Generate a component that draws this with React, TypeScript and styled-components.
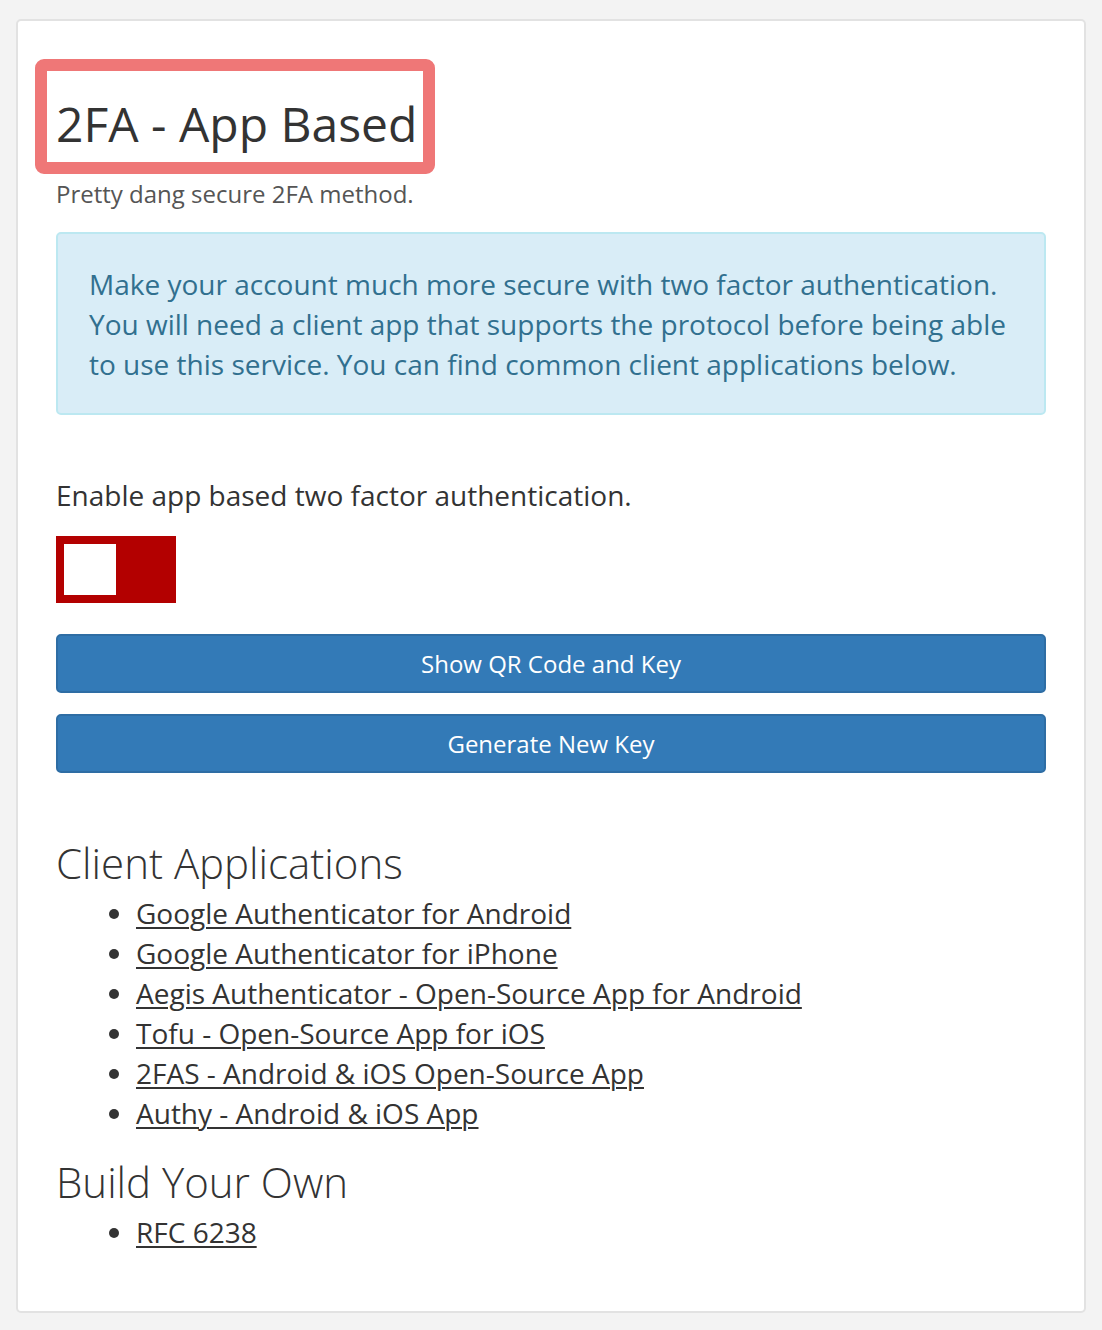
import React, { FC, useState } from 'react';
import styled, { createGlobalStyle } from 'styled-components';

type LinkItem = { id: number; label: string };

const clientApps: LinkItem[] = [
  { id: 1, label: 'Google Authenticator for Android' },
  { id: 2, label: 'Google Authenticator for iPhone' },
  { id: 3, label: 'Aegis Authenticator - Open-Source App for Android' },
  { id: 4, label: 'Tofu - Open-Source App for iOS' },
  { id: 5, label: '2FAS - Android & iOS Open-Source App' },
  { id: 6, label: 'Authy - Android & iOS App' },
];

const buildOwn: LinkItem[] = [{ id: 1, label: 'RFC 6238' }];

const GlobalStyle = createGlobalStyle`
  html, body {
    margin: 0;
    padding: 0;
    background: #f3f3f3;
  }
  body {
    font-family: "Open Sans", "Noto Sans", sans-serif;
    color: #333;
  }
`;

const App: FC = () => {
  const [enabled, setEnabled] = useState(false);

  return (
    <>
      <GlobalStyle />
      <Page>
        <Card>
          <TitleBox>
            <Title>2FA - App Based</Title>
          </TitleBox>
          <Subtitle>Pretty dang secure 2FA method.</Subtitle>

          <InfoAlert>
            Make your account much more secure with two factor authentication.
            You will need a client app that supports the protocol before being
            able to use this service. You can find common client applications
            below.
          </InfoAlert>

          <FieldLabel>Enable app based two factor authentication.</FieldLabel>
          <Toggle
            on={enabled}
            onClick={() => {
              setEnabled(!enabled);
            }}
          >
            <ToggleKnob />
          </Toggle>

          <ButtonStack>
            <PrimaryButton>Show QR Code and Key</PrimaryButton>
            <PrimaryButton>Generate New Key</PrimaryButton>
          </ButtonStack>

          <SectionTitle>Client Applications</SectionTitle>
          <LinkList>
            {clientApps.map((a) => {
              return (
                <li key={a.id}>
                  <a href="#">{a.label}</a>
                </li>
              );
            })}
          </LinkList>

          <SectionTitle>Build Your Own</SectionTitle>
          <LinkList>
            {buildOwn.map((a) => {
              return (
                <li key={a.id}>
                  <a href="#">{a.label}</a>
                </li>
              );
            })}
          </LinkList>
        </Card>
      </Page>
    </>
  );
};

export default App;

const Page = styled.div`
  padding: 19px 16px 19px 16px;
`;

const Card = styled.div`
  background: #fff;
  border: 2px solid #e2e2e2;
  border-radius: 5px;
  padding: 38px 38px 59px 38px;
`;

// highlighted heading (red frame around the title)
const TitleBox = styled.div`
  display: inline-block;
  margin: 0 0 0 -21px;
  border: 12px solid #ef7777;
  border-radius: 9px;
  padding: 20px 6px 5px 9px;
`;

const Title = styled.h1`
  margin: 0;
  font-size: 48px;
  font-weight: 400;
  line-height: 66px;
  color: #333;
`;

const Subtitle = styled.p`
  margin: 5px 0 0 0;
  font-size: 24px;
  line-height: 30px;
  color: #555;
`;

const InfoAlert = styled.div`
  margin-top: 23px;
  background: #d9edf7;
  border: 2px solid #bce8f1;
  border-radius: 5px;
  padding: 30px 31px 29px 31px;
  font-size: 28px;
  line-height: 40px;
  color: #31708f;
`;

const FieldLabel = styled.p`
  margin: 62px 0 0 0;
  font-size: 28px;
  line-height: 36px;
  color: #333;
`;

const Toggle = styled.div<{ on: boolean }>`
  display: flex;
  justify-content: ${({ on }) => (on ? 'flex-end' : 'flex-start')};
  width: 120px;
  height: 67px;
  margin-top: 23px;
  padding: 8px;
  box-sizing: border-box;
  background: ${({ on }) => (on ? '#3c9a3c' : '#b30000')};
  cursor: pointer;
`;

const ToggleKnob = styled.div`
  width: 52px;
  height: 51px;
  background: #fff;
`;

const ButtonStack = styled.div`
  display: flex;
  flex-direction: column;
  gap: 21px;
  margin-top: 31px;
`;

const PrimaryButton = styled.button`
  height: 59px;
  width: 100%;
  background: #337ab7;
  border: 2px solid #2e6da4;
  border-radius: 5px;
  color: #fff;
  font-family: "Open Sans", "Noto Sans", sans-serif;
  font-size: 24px;
  cursor: pointer;
`;

const SectionTitle = styled.h2`
  margin: 63px 0 0 0;
  font-size: 42px;
  font-weight: 300;
  line-height: 54px;
  color: #333;

  & + ul + & {
    margin-top: 22px;
  }
`;

const LinkList = styled.ul`
  margin: 3px 0 0 0;
  padding-left: 80px;
  font-size: 28px;
  line-height: 40px;

  a {
    color: #333;
    text-decoration: underline;
    text-decoration-thickness: 2px;
    text-underline-offset: 3px;
  }
`;
